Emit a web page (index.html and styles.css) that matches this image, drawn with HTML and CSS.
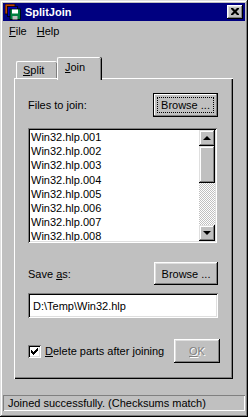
FILE: index.html
```html
<!DOCTYPE html>
<html lang="en">
<head>
  <meta charset="UTF-8">
  <title>SplitJoin</title>
  <link rel="stylesheet" href="styles.css">
</head>
<body>
  <div class="window">
    <!-- Title bar -->
    <div class="titlebar">
      <svg class="app-icon" width="16" height="16" viewBox="0 0 16 16">
        <rect x="0" y="0" width="10" height="10" fill="#c04000" stroke="#000" stroke-width="0.8"/>
        <rect x="2.5" y="2.5" width="10" height="10" fill="#0000c0" stroke="#000" stroke-width="0.8"/>
        <rect x="5" y="5" width="10.5" height="10.5" fill="#008040" stroke="#000" stroke-width="0.8"/>
        <rect x="7" y="5.5" width="6" height="4" fill="#fff"/>
        <rect x="7.5" y="12" width="5" height="3.5" fill="#c0c0c0"/>
      </svg>
      <span class="title">SplitJoin</span>
      <div class="close-btn">
        <svg width="8" height="7" viewBox="0 0 8 7">
          <path d="M0 0h2l2 2 2-2h2v1l-2.5 2.5 2.5 2.5v1h-2l-2-2-2 2h-2v-1l2.5-2.5-2.5-2.5z" fill="#000"/>
        </svg>
      </div>
    </div>

    <!-- Menu bar -->
    <div class="menubar">
      <span class="menu-item"><u>F</u>ile</span>
      <span class="menu-item"><u>H</u>elp</span>
    </div>

    <!-- Tabs -->
    <div class="tabs">
      <div class="tab"><u>S</u>plit</div>
      <div class="tab active"><u>J</u>oin</div>
    </div>

    <div class="panel">
      <div class="row row-files">
        <span>Files to join:</span>
        <div class="button focused"><span class="focus-rect">Browse ...</span></div>
      </div>

      <div class="listbox">
        <div class="list-items">
          <div>Win32.hlp.001</div>
          <div>Win32.hlp.002</div>
          <div>Win32.hlp.003</div>
          <div>Win32.hlp.004</div>
          <div>Win32.hlp.005</div>
          <div>Win32.hlp.006</div>
          <div>Win32.hlp.007</div>
          <div>Win32.hlp.008</div>
        </div>
        <div class="scrollbar">
          <div class="scroll-btn"><span class="arrow-up"></span></div>
          <div class="scroll-thumb"></div>
          <div class="scroll-track"></div>
          <div class="scroll-btn"><span class="arrow-down"></span></div>
        </div>
      </div>

      <div class="row row-save">
        <span>Save <u>a</u>s:</span>
        <div class="button">Browse ...</div>
      </div>

      <div class="textfield">D:\Temp\Win32.hlp</div>

      <div class="row row-options">
        <label class="check">
          <span class="checkbox">
            <svg width="7" height="7" viewBox="0 0 7 7">
              <path d="M0 2h1v1h1v1h1v-1h1v-1h1v-1h1v-1h1v3h-1v1h-1v1h-1v1h-1v1h-1v-1h-1v-1h-1z" fill="#000"/>
            </svg>
          </span>
          <span><u>D</u>elete parts after joining</span>
        </label>
        <div class="button ok disabled"><u>O</u>K</div>
      </div>
    </div>

    <!-- Status bar -->
    <div class="statusbar">Joined successfully. (Checksums match)</div>
  </div>
</body>
</html>
```

FILE: styles.css
```css
/* Base */
* {
    box-sizing: border-box;
}

body {
    margin: 0;
    background: #c0c0c0;
    font-family: "Liberation Sans", Arial, sans-serif;
    font-size: 11px;
    color: #000;
}

u {
    text-decoration: underline;
    text-underline-offset: 1px;
}

/* Window frame */
.window {
    width: 248px;
    height: 417px;
    padding: 3px;
    background: #c0c0c0;
    box-shadow: inset -1px -1px #000, inset 1px 1px #dfdfdf,
                inset -2px -2px #808080, inset 2px 2px #fff;
    display: flex;
    flex-direction: column;
}

/* Title bar */
.titlebar {
    height: 18px;
    background: #000080;
    display: flex;
    align-items: center;
    padding: 0 2px 0 2px;
}

.app-icon {
    flex: none;
}

.title {
    color: #fff;
    font-weight: bold;
    margin-left: 4px;
    flex: 1;
}

.close-btn {
    width: 16px;
    height: 14px;
    background: #c0c0c0;
    box-shadow: inset -1px -1px #000, inset 1px 1px #fff,
                inset -2px -2px #808080, inset 2px 2px #dfdfdf;
    display: flex;
    align-items: center;
    justify-content: center;
    padding-bottom: 1px;
}

/* Menu bar */
.menubar {
    height: 20px;
    display: flex;
    align-items: center;
    padding-left: 6px;
    gap: 10px;
}

/* Tabs */
.tabs {
    margin: 16px 0 0 13px;
    height: 21px;
    display: flex;
    align-items: flex-end;
    position: relative;
    z-index: 1;
}

.tab {
    height: 17px;
    width: 41px;
    padding: 2px 0 0 6px;
    border-top: 1px solid #fff;
    border-left: 1px solid #fff;
    border-radius: 2px 2px 0 0;
    box-shadow: inset -1px 0 #808080;
}

.tab.active {
    width: 44px;
    height: 23px;
    margin-bottom: -2px;
    padding: 3px 0 0 7px;
    background: #c0c0c0;
    box-shadow: 1px 0 #000, inset -1px 0 #808080;
}

/* Tab page */
.panel {
    margin-left: 11px;
    width: 219px;
    height: 301px;
    padding: 15px 15px 0 14px;
    box-shadow: inset 1px 1px #fff, inset -1px -1px #000,
                inset -2px -2px #808080;
    display: flex;
    flex-direction: column;
}

.row {
    display: flex;
    align-items: center;
    justify-content: space-between;
}

/* Buttons */
.button {
    width: 65px;
    height: 24px;
    background: #c0c0c0;
    box-shadow: inset -1px -1px #000, inset 1px 1px #fff,
                inset -2px -2px #808080, inset 2px 2px #dfdfdf;
    display: flex;
    align-items: center;
    justify-content: center;
}

.button.focused {
    box-shadow: inset 0 0 0 1px #000, inset -2px -2px #808080,
                inset 2px 2px #fff;
}

.focus-rect {
    width: 57px;
    height: 16px;
    border: 1px dotted #000;
    display: flex;
    align-items: center;
    justify-content: center;
}

.button.ok {
    width: 46px;
    margin-right: -2px;
}

.button.disabled {
    color: #808080;
    text-shadow: 1px 1px #fff;
}

/* List box */
.listbox {
    margin-top: 11px;
    height: 115px;
    width: 189px;
    padding: 2px;
    background: #fff;
    box-shadow: inset 1px 1px #808080, inset -1px -1px #fff,
                inset 2px 2px #000, inset -2px -2px #dfdfdf;
    display: flex;
}

.list-items {
    flex: 1;
    padding-left: 1px;
    line-height: 14.2px;
    overflow: hidden;
}

.scrollbar {
    width: 16px;
    display: flex;
    flex-direction: column;
}

.scroll-btn,
.scroll-thumb {
    background: #c0c0c0;
    box-shadow: inset -1px -1px #000, inset 1px 1px #dfdfdf,
                inset -2px -2px #808080, inset 2px 2px #fff;
}

.scroll-btn {
    height: 16px;
    display: flex;
    align-items: center;
    justify-content: center;
}

.scroll-thumb {
    height: 37px;
}

.scroll-track {
    flex: 1;
    background-color: #c0c0c0;
    background-image: conic-gradient(#fff 25%, #c0c0c0 0 50%, #fff 0 75%, #c0c0c0 0);
    background-size: 2px 2px;
}

.arrow-up,
.arrow-down {
    width: 0;
    height: 0;
    border-left: 4px solid transparent;
    border-right: 4px solid transparent;
}

.arrow-up {
    border-bottom: 4px solid #000;
}

.arrow-down {
    border-top: 4px solid #000;
}

/* Save row */
.row-save {
    margin-top: 19px;
}

.row-save .button {
    width: 64px;
    height: 23px;
}

.textfield {
    margin-top: 8px;
    width: 190px;
    height: 25px;
    padding: 0 5px;
    background: #fff;
    box-shadow: inset 1px 1px #808080, inset -1px -1px #fff,
                inset 2px 2px #000, inset -2px -2px #dfdfdf;
    display: flex;
    align-items: center;
}

/* Options row */
.row-options {
    margin-top: 21px;
}

.check {
    display: flex;
    align-items: center;
    gap: 4px;
}

.checkbox {
    width: 13px;
    height: 13px;
    background: #fff;
    box-shadow: inset 1px 1px #808080, inset -1px -1px #fff,
                inset 2px 2px #000, inset -2px -2px #dfdfdf;
    display: flex;
    align-items: center;
    justify-content: center;
}

/* Status bar */
.statusbar {
    margin-top: 16px;
    height: 16px;
    padding-left: 5px;
    line-height: 16px;
    box-shadow: inset 1px 1px #808080, inset -1px -1px #fff;
}
```
